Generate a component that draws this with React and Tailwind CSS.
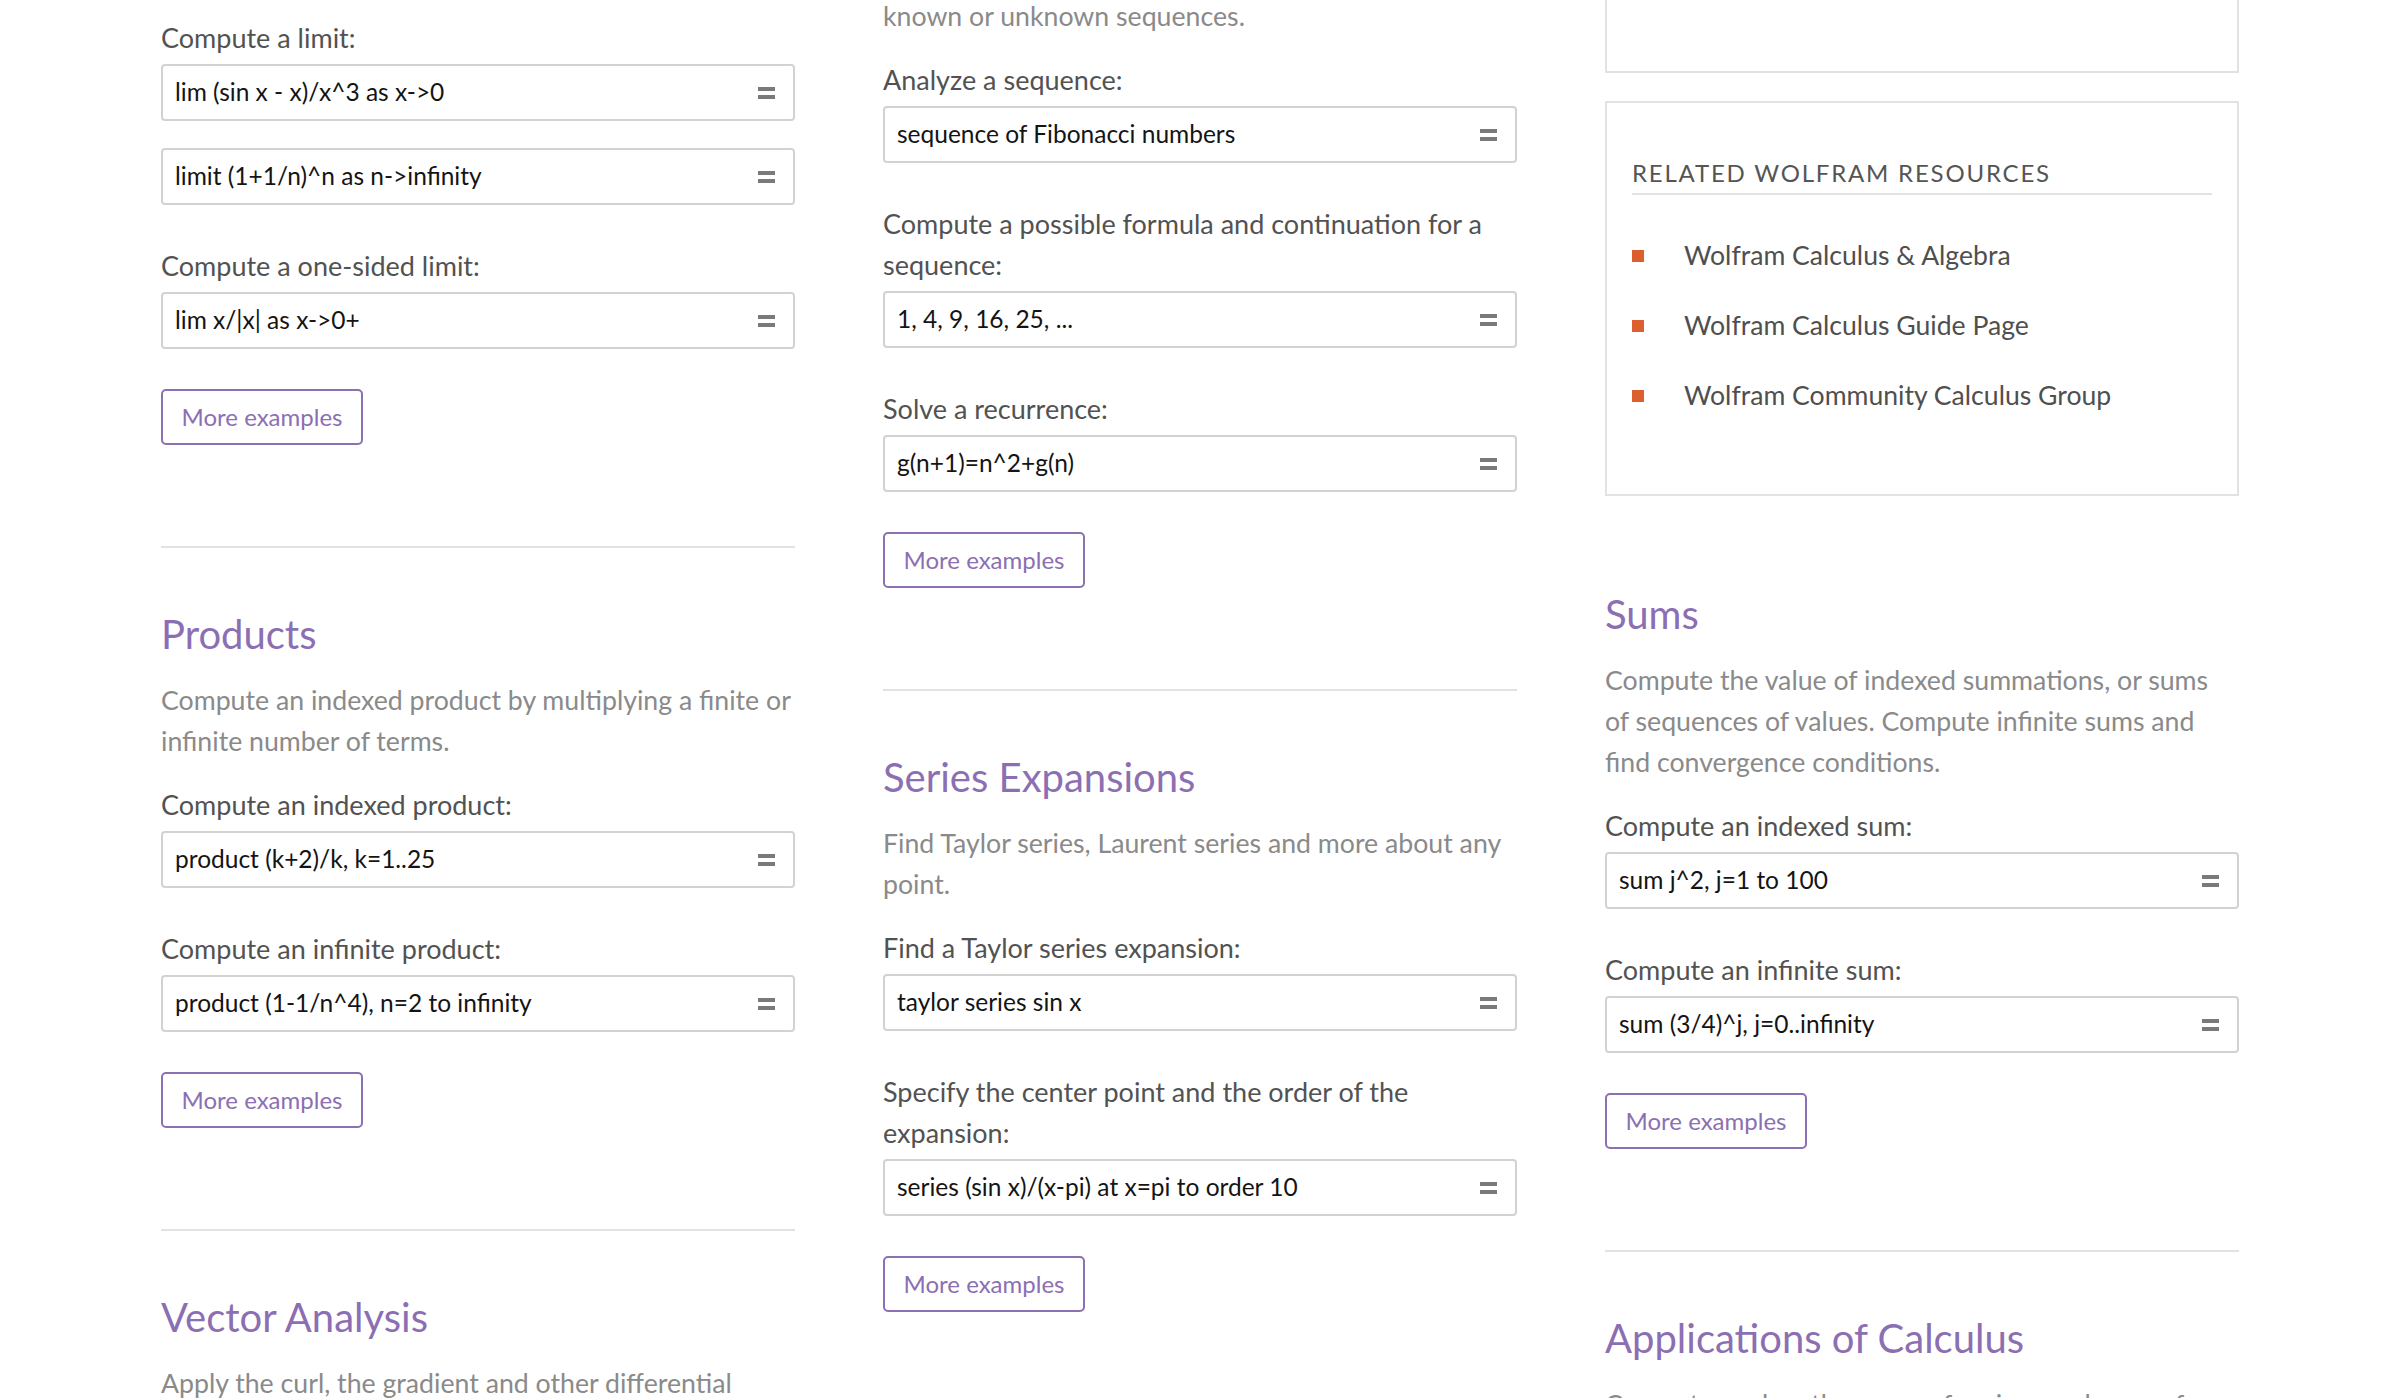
import React from "react";

const PURPLE = "text-[#8c6fb3]";

const EqualsIcon = () => (
    <span className="flex flex-col gap-[4px] w-[17px] shrink-0">
        <span className="h-[4px] bg-[#7a7a7a]" />
        <span className="h-[4px] bg-[#7a7a7a]" />
    </span>
);

const QueryBox = ({ text, className = "" }) => (
    <div className={`h-[57px] border-2 border-[#d2d2d2] rounded-[4px] flex items-center justify-between pl-[12px] pr-[18px] bg-white ${className}`}>
        <span className="text-[24.5px] leading-none text-[#141414] whitespace-nowrap">{text}</span>
        <EqualsIcon />
    </div>
);

const Example = ({ label, queries, first = false }) => (
    <div className={first ? "" : "mt-[40px]"}>
        <p className="text-[27px] leading-[41px] text-[#525252]">{label}</p>
        {queries.map((q, i) => (
            <QueryBox key={q} text={q} className={i === 0 ? "mt-[6px]" : "mt-[27px]"} />
        ))}
    </div>
);

const MoreButton = () => (
    <button
        type="button"
        className={`mt-[40px] self-start h-[56px] w-[202px] border-2 border-[#8c70b4] rounded-[5px] text-[24px] ${PURPLE} bg-white flex items-center justify-center`}
    >
        More examples
    </button>
);

const Divider = () => <div className="mt-[101px] h-[2px] bg-[#e2e2e2]" />;

const Heading = ({ children, className = "mt-[62px]" }) => (
    <h2 className={`text-[40px] leading-[48px] ${PURPLE} ${className}`}>{children}</h2>
);

const Description = ({ children }) => (
    <p className="mt-[22px] text-[26.7px] leading-[41px] text-[#8a8a8a]">{children}</p>
);

const resources = [
    "Wolfram Calculus & Algebra",
    "Wolfram Calculus Guide Page",
    "Wolfram Community Calculus Group",
];

export default function App() {
    return (
        <div className="h-[1398px] overflow-hidden bg-white font-['Lato','Noto_Sans',sans-serif]">
            <div className="w-[2078px] mx-auto grid grid-cols-3 gap-x-[88px] items-start">
                {/* column 1 */}
                <div className="flex flex-col pt-[17px]">
                    <Example first label="Compute a limit:" queries={["lim (sin x - x)/x^3 as x->0", "limit (1+1/n)^n as n->infinity"]} />
                    <Example label="Compute a one-sided limit:" queries={["lim x/|x| as x->0+"]} />
                    <MoreButton />
                    <Divider />
                    <Heading>Products</Heading>
                    <Description>Compute an indexed product by multiplying a finite or infinite number of terms.</Description>
                    <div className="mt-[22px]">
                        <Example first label="Compute an indexed product:" queries={["product (k+2)/k, k=1..25"]} />
                        <Example label="Compute an infinite product:" queries={["product (1-1/n^4), n=2 to infinity"]} />
                    </div>
                    <MoreButton />
                    <Divider />
                    <Heading>Vector Analysis</Heading>
                    <Description>Apply the curl, the gradient and other differential operators to vector fields.</Description>
                </div>

                {/* column 2 */}
                <div className="flex flex-col mt-[-4px]">
                    <p className="text-[26.7px] leading-[41px] text-[#8a8a8a]">known or unknown sequences.</p>
                    <div className="mt-[22px]">
                        <Example first label="Analyze a sequence:" queries={["sequence of Fibonacci numbers"]} />
                        <Example label="Compute a possible formula and continuation for a sequence:" queries={["1, 4, 9, 16, 25, ..."]} />
                        <Example label="Solve a recurrence:" queries={["g(n+1)=n^2+g(n)"]} />
                    </div>
                    <MoreButton />
                    <Divider />
                    <Heading>Series Expansions</Heading>
                    <Description>Find Taylor series, Laurent series and more about any point.</Description>
                    <div className="mt-[22px]">
                        <Example first label="Find a Taylor series expansion:" queries={["taylor series sin x"]} />
                        <Example label="Specify the center point and the order of the expansion:" queries={["series (sin x)/(x-pi) at x=pi to order 10"]} />
                    </div>
                    <MoreButton />
                </div>

                {/* column 3 */}
                <div className="flex flex-col">
                    <div className="h-[73px] border-2 border-t-0 border-[#e2e2e2]" />
                    <div className="mt-[28px] border-2 border-[#e2e2e2] pt-[55px] pb-[78px] px-[25px]">
                        <h3 className="text-[24px] leading-[30px] tracking-[1.8px] uppercase text-[#555] pb-[5px] border-b-2 border-[#e2e2e2]">
                            Related Wolfram Resources
                        </h3>
                        <ul className="mt-[41px] flex flex-col gap-[30px]">
                            {resources.map((r) => (
                                <li key={r} className="flex items-center gap-[40px] h-[40px]">
                                    <span className="w-[12px] h-[12px] bg-[#dd5f30] shrink-0" />
                                    <span className="text-[26.6px] text-[#4f4f4f]">{r}</span>
                                </li>
                            ))}
                        </ul>
                    </div>
                    <Heading className="mt-[94px]">Sums</Heading>
                    <Description>
                        Compute the value of indexed summations, or sums
                        <br />
                        of sequences of values. Compute infinite sums and
                        <br />
                        find convergence conditions.
                    </Description>
                    <div className="mt-[22px]">
                        <Example first label="Compute an indexed sum:" queries={["sum j^2, j=1 to 100"]} />
                        <Example label="Compute an infinite sum:" queries={["sum (3/4)^j, j=0..infinity"]} />
                    </div>
                    <MoreButton />
                    <Divider />
                    <Heading>Applications of Calculus</Heading>
                    <Description>Compute arc lengths, areas of regions, volumes of solids and other quantities.</Description>
                </div>
            </div>
        </div>
    );
}
